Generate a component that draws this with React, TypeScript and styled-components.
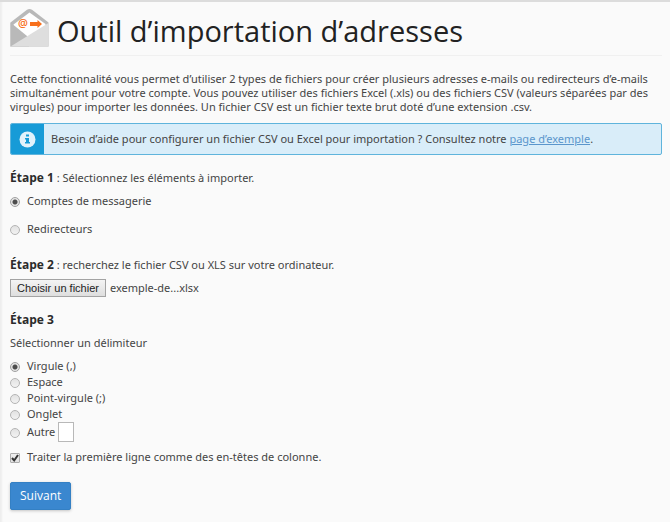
import React, { useRef, useState } from "react";
import styled, { createGlobalStyle } from "styled-components";

const GlobalStyle = createGlobalStyle`
  *, *::before, *::after { box-sizing: border-box; }
  html { background: #fafafa; }
  body {
    margin: 0;
    font-family: "Noto Sans", "Open Sans", sans-serif;
    font-size: 11px;
    line-height: 14px;
    color: #444444;
  }
`;

const Page = styled.main`
  min-height: 100vh;
  padding: 6px 8px 12px 10px;
  background: #fafafa;
  border-top: 2px solid #dcdcdc;
  box-shadow: inset 3px 0 2px -1px #eeeeee;
`;

const Header = styled.header`
  display: flex;
  align-items: flex-start;
  gap: 8px;
  padding-bottom: 7px;
  border-bottom: 1px solid #f0f0f0;

  svg {
    flex: none;
  }
`;

const Title = styled.h1`
  margin: 6px 0 0;
  font-family: "Open Sans", "Noto Sans", sans-serif;
  font-size: 29px;
  line-height: 34px;
  font-weight: 400;
  color: #222222;
`;

const Intro = styled.p`
  margin: 16px 0 9px;
`;

const Notice = styled.aside`
  display: flex;
  min-height: 32px;
  border: 1px solid #5fb4dc;
  border-radius: 2px;
  background: #d9edf9;
  overflow: hidden;
`;

const NoticeIcon = styled.div`
  display: flex;
  flex: none;
  align-items: center;
  justify-content: center;
  width: 33px;
  background: #179bd7;
`;

const NoticeText = styled.p`
  margin: 0;
  padding: 7px;
  line-height: 16px;
`;

const Link = styled.a`
  color: #5b96cc;
  text-decoration: underline;
`;

const Step = styled.section<{ $gap: number }>`
  margin-top: ${(p) => p.$gap}px;
`;

const StepTitle = styled.h2`
  margin: 0;
  font-size: 11px;
  line-height: 16px;
  font-weight: 400;

  strong {
    font-family: "Open Sans", "Noto Sans", sans-serif;
    font-size: 12px;
    font-weight: 700;
    color: #2b2b2b;
  }
`;

const Hint = styled.p`
  margin: 7px 0;
  line-height: 16px;
`;

const Options = styled.div<{ $gap: number }>`
  display: flex;
  flex-direction: column;
  align-items: flex-start;
  gap: ${(p) => p.$gap}px;
`;

const AccountOptions = styled(Options)`
  margin-top: 7px;
`;

const Choice = styled.label`
  display: flex;
  align-items: center;
  gap: 7px;
  line-height: 16px;
`;

const Radio = styled.input.attrs({ type: "radio" })`
  appearance: none;
  flex: none;
  width: 10px;
  height: 10px;
  margin: 1px 0 0;
  border: 1px solid #b4b4b4;
  border-radius: 50%;
  background: linear-gradient(#e2e2e2, #f2f2f2);

  &:checked {
    border-color: #a0a0a0;
    background: radial-gradient(circle, #4c4c4c 0 2px, #e4e4e4 3px);
  }
`;

const CheckMark = styled.span`
  position: relative;
  display: flex;
  flex: none;
  margin-top: 2px;

  svg {
    position: absolute;
    inset: 0;
    pointer-events: none;
  }
`;

const Checkbox = styled.input.attrs({ type: "checkbox" })`
  appearance: none;
  width: 10px;
  height: 10px;
  margin: 0;
  border: 1px solid #adadad;
  border-radius: 1px;
  background: linear-gradient(#eeeeee, #e2e2e2);

  &:not(:checked) + svg {
    display: none;
  }
`;

const OtherRow = styled.div`
  display: flex;
  align-items: center;
  gap: 3px;
`;

const OtherInput = styled.input`
  width: 16px;
  height: 20px;
  padding: 0 2px;
  border: 1px solid #b8b8b8;
  background: #ffffff;
  font: inherit;
  color: inherit;
`;

const FileRow = styled.div`
  display: flex;
  align-items: center;
  gap: 4px;
  margin-top: 6px;
`;

const FileButton = styled.button`
  height: 18px;
  padding: 0 6px;
  border: 1px solid #a3a3a3;
  background: linear-gradient(#f4f4f4, #dedede);
  font-family: "Liberation Sans", Arial, sans-serif;
  font-size: 11px;
  line-height: 16px;
  color: #1c1c1c;
  white-space: nowrap;
`;

const Submit = styled.button`
  display: block;
  height: 28px;
  margin-top: 17px;
  padding: 0 9px;
  border: 1px solid #3480c4;
  border-radius: 2px;
  background: #3a87cf;
  box-shadow: 0 1px 3px #c4c4c4;
  font-family: "Open Sans", "Noto Sans", sans-serif;
  font-size: 12px;
  line-height: 24px;
  color: #ffffff;
`;

const MailIcon = () => (
  <svg width="39" height="39" viewBox="0 0 39 39" aria-hidden="true">
    <path d="M0.500 14.500 L17 1.800 Q19.500 0 22 1.800 L38.500 14.500 V38.500 H0.500Z" fill="#b9b9b9" />
    <path d="M3.500 16.500 L19.500 4.500 L35.500 16 V18 L17 30 L3.500 18Z" fill="#ffffff" />
    <path d="M0.500 14.500 L17 28 L19 38.500 H0.500Z" fill="#b9b9b9" />
    <path d="M38.500 15 V38.500 H0.500Z" fill="#dedede" />
    <path d="M20 14 H27.500 V12 L32 16 L27.500 20 V18 H20Z" fill="#f8701c" />
    <text x="8" y="19" fontFamily="Open Sans, sans-serif" fontSize="11" fontWeight="600" fill="#f8701c">
      @
    </text>
  </svg>
);

const InfoIcon = () => (
  <svg width="17" height="17" viewBox="0 0 17 17" aria-hidden="true">
    <circle cx="8.500" cy="8.500" r="8" fill="#e2f2fb" />
    <path d="M7 3.500h3v2H7z M6 7h4v4h1v1.500H6V11h1V8.500H6z" fill="#179bd7" />
  </svg>
);

const delimiters = ["Virgule (,)", "Espace", "Point-virgule (;)", "Onglet"];

export default function App() {
  const fileInput = useRef<HTMLInputElement>(null);
  const [fileName, setFileName] = useState("exemple-de...xlsx");

  return (
    <>
      <GlobalStyle />
      <Page>
        <Header>
          <MailIcon />
          <Title>Outil d’importation d’adresses</Title>
        </Header>

        <Intro>
          Cette fonctionnalité vous permet d’utiliser 2 types de fichiers pour créer plusieurs adresses e-mails ou
          redirecteurs d’e-mails simultanément pour votre compte. Vous pouvez utiliser des fichiers Excel (.xls) ou des
          fichiers CSV (valeurs séparées par des virgules) pour importer les données. Un fichier CSV est un fichier
          texte brut doté d’une extension .csv.
        </Intro>

        <Notice>
          <NoticeIcon>
            <InfoIcon />
          </NoticeIcon>
          <NoticeText>
            Besoin d’aide pour configurer un fichier CSV ou Excel pour importation ? Consultez notre{" "}
            <Link href="#exemple">page d’exemple</Link>.
          </NoticeText>
        </Notice>

        <Step $gap={15}>
          <StepTitle>
            <strong>Étape 1</strong> : Sélectionnez les éléments à importer.
          </StepTitle>
          <AccountOptions $gap={12} role="radiogroup" aria-label="Éléments à importer">
            <Choice>
              <Radio name="kind" defaultChecked />
              Comptes de messagerie
            </Choice>
            <Choice>
              <Radio name="kind" />
              Redirecteurs
            </Choice>
          </AccountOptions>
        </Step>

        <Step $gap={20}>
          <StepTitle>
            <strong>Étape 2</strong> : recherchez le fichier CSV ou XLS sur votre ordinateur.
          </StepTitle>
          <FileRow>
            <FileButton type="button" onClick={() => fileInput.current?.click()}>
              Choisir un fichier
            </FileButton>
            <input
              ref={fileInput}
              type="file"
              accept=".csv,.xls,.xlsx"
              hidden
              aria-label="Choisir un fichier"
              onChange={(e) => setFileName(e.target.files?.[0]?.name ?? fileName)}
            />
            <span>{fileName}</span>
          </FileRow>
        </Step>

        <Step $gap={15}>
          <StepTitle>
            <strong>Étape 3</strong>
          </StepTitle>
          <Hint>Sélectionner un délimiteur</Hint>
          <Options $gap={0} role="radiogroup" aria-label="Délimiteur">
            {delimiters.map((label, i) => (
              <Choice key={label}>
                <Radio name="delimiter" defaultChecked={i === 0} />
                {label}
              </Choice>
            ))}
            <OtherRow>
              <Choice>
                <Radio name="delimiter" />
                Autre
              </Choice>
              <OtherInput type="text" maxLength={1} aria-label="Autre délimiteur" />
            </OtherRow>
          </Options>
        </Step>

        <Step $gap={7}>
          <Choice>
            <CheckMark>
              <Checkbox defaultChecked />
              <svg width="10" height="10" viewBox="0 0 10 10" aria-hidden="true">
                <path d="M2 5 L4.200 7.500 L8 2" fill="none" stroke="#333333" strokeWidth="2" />
              </svg>
            </CheckMark>
            Traiter la première ligne comme des en-têtes de colonne.
          </Choice>
          <Submit type="submit">Suivant</Submit>
        </Step>
      </Page>
    </>
  );
}
